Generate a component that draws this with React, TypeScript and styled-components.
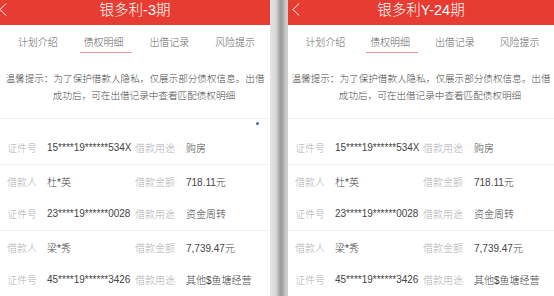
import styled, { createGlobalStyle } from 'styled-components';
import { ReactElement } from 'react';

const GlobalStyle = createGlobalStyle`
  html, body {
    margin: 0;
    padding: 0;
    background: #ffffff;
  }
  body {
    font-family: 'Liberation Sans', 'Noto Sans CJK SC', sans-serif;
    font-weight: 300;
  }
`;

type TRow = { label1: string; value1: string; label2: string; value2: string };

const Page = styled.div`
  display: flex;
  width: 554px;
  height: 296px;
  overflow: hidden;
`;

const Panel = styled.div<{ $width: number }>`
  width: ${(p) => p.$width}px;
  flex-shrink: 0;
  display: flex;
  flex-direction: column;
  background: #ffffff;
`;

const Gutter = styled.div`
  width: 18px;
  flex-shrink: 0;
  background: linear-gradient(
    to right,
    #e4e4e4 0px,
    #d8d8d8 6px,
    #b9b9b9 8px,
    #989898 11px,
    #a9a9a9 13px,
    #c4c4c4 15px,
    #d2d2d2 18px
  );
`;

const Header = styled.div`
  height: 25px;
  background: #e63c31;
  display: grid;
  grid-template-columns: 30px 1fr 30px;
  align-items: start;
`;

const BackArrow = styled.svg<{ $offset: number }>`
  margin-left: ${(p) => p.$offset}px;
  margin-top: 3px;
  display: block;
`;

const Title = styled.div`
  color: #ffffff;
  font-size: 14.5px;
  line-height: 18px;
  padding-top: 1px;
  text-align: center;
  white-space: nowrap;
`;

const Tabs = styled.div`
  display: flex;
  height: 35px;
  padding: 0 2px 0 5px;
`;

const Tab = styled.div<{ $active?: boolean }>`
  flex: 1;
  position: relative;
  display: flex;
  align-items: center;
  justify-content: center;
  font-size: 10px;
  color: #666666;
  padding-bottom: 1px;

  &::after {
    content: '';
    display: ${(p) => (p.$active ? 'block' : 'none')};
    position: absolute;
    left: 50%;
    bottom: 6px;
    width: 52px;
    margin-left: -24px;
    height: 1px;
    background: #ec9690;
  }
`;

const Tip = styled.div`
  padding: 11px 0 14px;
  color: #4a4a4a;
  font-size: 9.6px;
  line-height: 17px;
`;

const TipLine = styled.div<{ $shift?: number }>`
  text-align: center;
  white-space: nowrap;
  padding-left: ${(p) => p.$shift ?? 0}px;
`;

const Divider = styled.div`
  height: 1px;
  background: #f1f1f1;
`;

const Spacer = styled.div`
  height: 13px;
  display: flex;
  justify-content: flex-end;
  align-items: flex-start;
`;

const Dot = styled.span`
  width: 3px;
  height: 3px;
  border-radius: 50%;
  background: #3a6ea8;
  margin: 3px 11px 0 0;
`;

const Row = styled.div`
  height: 32.5px;
  display: grid;
  grid-template-columns: 40px 88px 40px 1fr;
  align-items: center;
  padding-left: 7px;
  font-size: 10px;
  white-space: nowrap;
`;

const Label = styled.span<{ $right?: boolean }>`
  color: #b0b0b0;
  text-align: ${(p) => (p.$right ? 'right' : 'left')};
`;

const Value = styled.span<{ $gap?: number }>`
  color: #444444;
  padding-left: ${(p) => p.$gap ?? 0}px;
`;

const groups: TRow[][] = [
  [
    { label1: '借款人', value1: '杜*英', label2: '借款金额', value2: '718.11元' },
    { label1: '证件号', value1: '23****19******0028', label2: '借款用途', value2: '资金周转' },
  ],
  [
    { label1: '借款人', value1: '梁*秀', label2: '借款金额', value2: '7,739.47元' },
    { label1: '证件号', value1: '45****19******3426', label2: '借款用途', value2: '其他$鱼塘经营' },
  ],
];

const firstRow: TRow = {
  label1: '证件号',
  value1: '15****19******534X',
  label2: '借款用途',
  value2: '购房',
};

function DetailRow({ row }: { row: TRow }): ReactElement {
  return (
    <Row>
      <Label>{row.label1}</Label>
      <Value>{row.value1}</Value>
      <Label $right>{row.label2}</Label>
      <Value $gap={11}>{row.value2}</Value>
    </Row>
  );
}

function Phone({
  title,
  width,
  arrowOffset,
  showDot,
}: {
  title: string;
  width: number;
  arrowOffset: number;
  showDot?: boolean;
}): ReactElement {
  return (
    <Panel $width={width}>
      <Header>
        <BackArrow $offset={arrowOffset} width="8" height="13" viewBox="0 0 8 13">
          <polyline points="7,0.5 1,6.5 7,12.5" fill="none" stroke="#ffffff" strokeWidth="1" />
        </BackArrow>
        <Title>{title}</Title>
        <span />
      </Header>
      <Tabs>
        <Tab>计划介绍</Tab>
        <Tab $active>债权明细</Tab>
        <Tab>出借记录</Tab>
        <Tab>风险提示</Tab>
      </Tabs>
      <Tip>
        <TipLine>温馨提示：为了保护借款人隐私，仅展示部分债权信息。出借</TipLine>
        <TipLine $shift={18}>成功后，可在出借记录中查看匹配债权明细</TipLine>
      </Tip>
      <Divider />
      <Spacer>{showDot && <Dot />}</Spacer>
      <DetailRow row={firstRow} />
      {groups.map((g, i) => (
        <div key={i}>
          <Divider />
          {g.map((r, j) => (
            <DetailRow key={j} row={r} />
          ))}
        </div>
      ))}
    </Panel>
  );
}

export default function App(): ReactElement {
  return (
    <>
      <GlobalStyle />
      <Page>
        <Phone title="银多利-3期" width={270} arrowOffset={-1} showDot />
        <Gutter />
        <Phone title="银多利Y-24期" width={266} arrowOffset={4} />
      </Page>
    </>
  );
}
